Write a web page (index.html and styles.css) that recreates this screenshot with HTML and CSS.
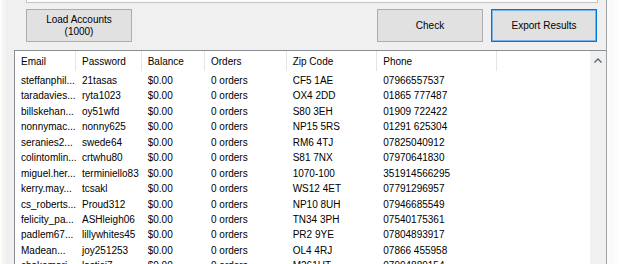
FILE: index.html
```html
<!DOCTYPE html>
<html>
<head>
<meta charset="utf-8">
<link rel="stylesheet" href="styles.css">
</head>
<body>
<div class="window">
  <div class="topbox"></div>
  <div class="toolbar">
    <button class="btn">Load Accounts<br>(1000)</button>
    <div class="right-group">
      <button class="btn">Check</button>
      <button class="btn focused">Export Results</button>
    </div>
  </div>
  <div class="listview">
    <div class="list-main">
      <div class="row header">
        <div class="cell">Email</div><div class="cell">Password</div><div class="cell">Balance</div><div class="cell">Orders</div><div class="cell">Zip Code</div><div class="cell">Phone</div><div class="cell last"></div>
      </div>
      <div class="row"><div class="cell">steffanphil...</div><div class="cell">21tasas</div><div class="cell">$0.00</div><div class="cell">0 orders</div><div class="cell">CF5 1AE</div><div class="cell">07966557537</div><div class="cell last"></div></div>
      <div class="row"><div class="cell">taradavies...</div><div class="cell">ryta1023</div><div class="cell">$0.00</div><div class="cell">0 orders</div><div class="cell">OX4 2DD</div><div class="cell">01865 777487</div><div class="cell last"></div></div>
      <div class="row"><div class="cell">billskehan...</div><div class="cell">oy51wfd</div><div class="cell">$0.00</div><div class="cell">0 orders</div><div class="cell">S80 3EH</div><div class="cell">01909 722422</div><div class="cell last"></div></div>
      <div class="row"><div class="cell">nonnymac...</div><div class="cell">nonny625</div><div class="cell">$0.00</div><div class="cell">0 orders</div><div class="cell">NP15 5RS</div><div class="cell">01291 625304</div><div class="cell last"></div></div>
      <div class="row"><div class="cell">seranies2...</div><div class="cell">swede64</div><div class="cell">$0.00</div><div class="cell">0 orders</div><div class="cell">RM6 4TJ</div><div class="cell">07825040912</div><div class="cell last"></div></div>
      <div class="row"><div class="cell">colintomlin...</div><div class="cell">crtwhu80</div><div class="cell">$0.00</div><div class="cell">0 orders</div><div class="cell">S81 7NX</div><div class="cell">07970641830</div><div class="cell last"></div></div>
      <div class="row"><div class="cell">miguel.her...</div><div class="cell">terminiello83</div><div class="cell">$0.00</div><div class="cell">0 orders</div><div class="cell">1070-100</div><div class="cell">351914566295</div><div class="cell last"></div></div>
      <div class="row"><div class="cell">kerry.may...</div><div class="cell">tcsakl</div><div class="cell">$0.00</div><div class="cell">0 orders</div><div class="cell">WS12 4ET</div><div class="cell">07791296957</div><div class="cell last"></div></div>
      <div class="row"><div class="cell">cs_roberts...</div><div class="cell">Proud312</div><div class="cell">$0.00</div><div class="cell">0 orders</div><div class="cell">NP10 8UH</div><div class="cell">07946685549</div><div class="cell last"></div></div>
      <div class="row"><div class="cell">felicity_pa...</div><div class="cell">ASHleigh06</div><div class="cell">$0.00</div><div class="cell">0 orders</div><div class="cell">TN34 3PH</div><div class="cell">07540175361</div><div class="cell last"></div></div>
      <div class="row"><div class="cell">padlem67...</div><div class="cell">lillywhites45</div><div class="cell">$0.00</div><div class="cell">0 orders</div><div class="cell">PR2 9YE</div><div class="cell">07804893917</div><div class="cell last"></div></div>
      <div class="row"><div class="cell">Madean...</div><div class="cell">joy251253</div><div class="cell">$0.00</div><div class="cell">0 orders</div><div class="cell">OL4 4RJ</div><div class="cell">07866 455958</div><div class="cell last"></div></div>
      <div class="row"><div class="cell">chakemari...</div><div class="cell">lastici7</div><div class="cell">$0.00</div><div class="cell">0 orders</div><div class="cell">M261UT</div><div class="cell">07904889154</div><div class="cell last"></div></div>
    </div>
    <div class="scrollbar">
      <svg class="arrow" width="8" height="5" viewBox="0 0 8 5"><path d="M0.5 4.5 L4 1 L7.5 4.5" fill="none" stroke="#606060" stroke-width="1.3"/></svg>
    </div>
  </div>
</div>
</body>
</html>
```
FILE: styles.css
```css
html, body {
  margin: 0;
  padding: 0;
  width: 620px;
  height: 264px;
  overflow: hidden;
  background: linear-gradient(to right, #e6e6e6 0, #fafafa 612px, #ffffff 620px);
  font-family: "Liberation Sans", Arial, sans-serif;
  font-size: 10px;
  color: #000;
}

.window {
  width: 607px;
  height: 264px;
  background: linear-gradient(to right, #ffffff 0, #f6f6f6 3px, #f0f0f0 7px, #f0f0f0 100%);
  border-right: 1px solid #9ea3a8;
  box-sizing: border-box;
  display: flex;
  flex-direction: column;
  overflow: hidden;
}

.topbox {
  margin-left: 26px;
  width: 572px;
  height: 3px;
  box-sizing: border-box;
  border: 1px solid #c4c4c4;
  border-top: none;
  background: #fbfbfb;
  flex: none;
}

.toolbar {
  display: flex;
  margin-top: 6px;
  padding-left: 26px;
  padding-right: 9px;
  flex: none;
}

.right-group {
  margin-left: auto;
  display: flex;
  gap: 8px;
}

.btn {
  width: 106px;
  height: 33px;
  box-sizing: border-box;
  border: 1px solid #adadad;
  background: #e1e1e1;
  font-family: "Liberation Sans", Arial, sans-serif;
  font-size: 10px;
  line-height: 12px;
  color: #000;
  padding: 0;
  margin: 0;
  text-align: center;
}

.btn.focused {
  border: 1px solid #0078d7;
  box-shadow: inset 0 0 0 1px #7ab3e6;
}

.listview {
  margin-top: 8px;
  margin-left: 14px;
  width: 593px;
  height: 260px;
  box-sizing: border-box;
  border: 1px solid #8a8e95;
  border-bottom: none;
  background: #fff;
  display: flex;
  flex: none;
}

.list-main {
  flex: 1;
  min-width: 0;
}

.row {
  display: grid;
  grid-template-columns: 61px 65.7px 63.3px 81.7px 90.6px 119.4px 1fr;
  height: 15.45px;
  line-height: 15.45px;
  white-space: nowrap;
}

.row.header {
  height: 22px;
  line-height: 22px;
}

.cell {
  padding-left: 6px;
  overflow: hidden;
}

.row.header .cell {
  box-sizing: border-box;
  height: 20px;
  line-height: 22px;
  border-right: 1px solid #e5e5e5;
}

.row.header .cell.last {
  border-right: none;
}

.scrollbar {
  width: 16px;
  flex: none;
  background: #f0f0f0;
  display: flex;
  justify-content: center;
  padding-top: 7px;
  box-sizing: border-box;
}

.arrow {
  display: block;
}
```
